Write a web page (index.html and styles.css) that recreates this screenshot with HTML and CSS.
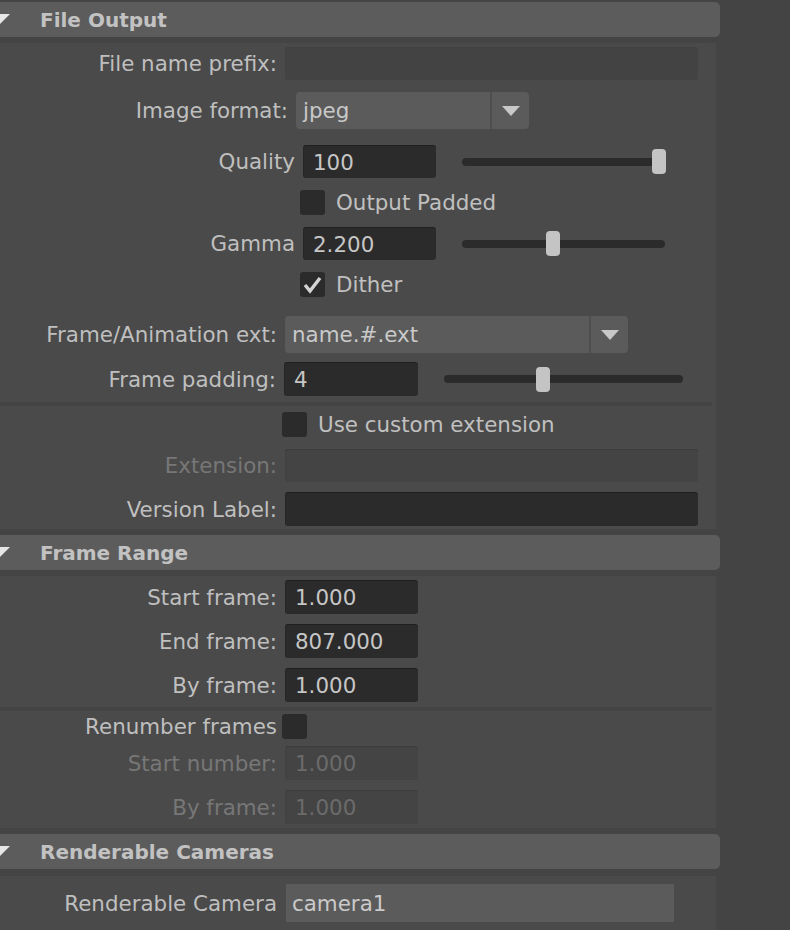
FILE: index.html
```html
<!DOCTYPE html>
<html>
<head>
<meta charset="utf-8">
<link rel="stylesheet" href="styles.css">
</head>
<body>
<div class="panel">
  <div class="header"><svg class="tri" width="12" height="12" viewBox="0 0 12 12"><polygon points="0,0 10,0 0,10" fill="#e6e6e6"/></svg><span>File Output</span></div>
  <div class="body b1">
    <div class="row h33">
      <div class="lbl w277">File name prefix:</div>
      <div class="field soft wide"></div>
    </div>
    <div class="row h37 g12">
      <div class="lbl w288">Image format:</div>
      <div class="dropdown dd1"><span class="ddtext">jpeg</span><span class="ddbtn"><svg width="18" height="10" viewBox="0 0 18 10"><polygon points="0,0 18,0 9,10" fill="#c8c8c8"/></svg></span></div>
    </div>
    <div class="row h33 g16">
      <div class="lbl w295">Quality</div>
      <div class="field dark num133"><span class="val">100</span></div>
      <div class="slider s203"><div class="track"></div><div class="thumb" style="left:190px"></div></div>
    </div>
    <div class="row h25 g12">
      <div class="spacer" style="width:300px"></div>
      <div class="check"></div><span class="ctext">Output Padded</span>
    </div>
    <div class="row h33 g12">
      <div class="lbl w295">Gamma</div>
      <div class="field dark num133"><span class="val">2.200</span></div>
      <div class="slider s203"><div class="track"></div><div class="thumb" style="left:84px"></div></div>
    </div>
    <div class="row h25 g12">
      <div class="spacer" style="width:300px"></div>
      <div class="check"><svg width="25" height="25" viewBox="0 0 25 25"><polyline points="5,13 10,19 20,6" fill="none" stroke="#d4d4d4" stroke-width="3.4" stroke-linejoin="miter"/></svg></div><span class="ctext">Dither</span>
    </div>
    <div class="row h37 g19">
      <div class="lbl w277">Frame/Animation ext:</div>
      <div class="dropdown dd2"><span class="ddtext">name.#.ext</span><span class="ddbtn"><svg width="18" height="10" viewBox="0 0 18 10"><polygon points="0,0 18,0 9,10" fill="#c8c8c8"/></svg></span></div>
    </div>
    <div class="row h34 g9">
      <div class="lbl w276">Frame padding:</div>
      <div class="field dark num134"><span class="val">4</span></div>
      <div class="slider s239"><div class="track"></div><div class="thumb" style="left:92px"></div></div>
    </div>
    <div class="sep"></div>
    <div class="row h25 g6">
      <div class="spacer" style="width:282px"></div>
      <div class="check"></div><span class="ctext">Use custom extension</span>
    </div>
    <div class="row h33 g12">
      <div class="lbl w277 dis">Extension:</div>
      <div class="field disabled wide"></div>
    </div>
    <div class="row h34 g10">
      <div class="lbl w277">Version Label:</div>
      <div class="field dark wide"></div>
    </div>
  </div>

  <div class="header"><svg class="tri" width="12" height="12" viewBox="0 0 12 12"><polygon points="0,0 10,0 0,10" fill="#e6e6e6"/></svg><span>Frame Range</span></div>
  <div class="body b2">
    <div class="row h34">
      <div class="lbl w277">Start frame:</div>
      <div class="field dark num133"><span class="val">1.000</span></div>
    </div>
    <div class="row h34 g10">
      <div class="lbl w277">End frame:</div>
      <div class="field dark num133"><span class="val">807.000</span></div>
    </div>
    <div class="row h34 g10">
      <div class="lbl w277">By frame:</div>
      <div class="field dark num133"><span class="val">1.000</span></div>
    </div>
    <div class="sep s2"></div>
    <div class="row h25 g3">
      <div class="lbl w277 tight">Renumber frames</div>
      <div class="check"></div>
    </div>
    <div class="row h34 g7">
      <div class="lbl w277 dis">Start number:</div>
      <div class="field disabled num133"><span class="val dval">1.000</span></div>
    </div>
    <div class="row h34 g10">
      <div class="lbl w277 dis">By frame:</div>
      <div class="field disabled num133"><span class="val dval">1.000</span></div>
    </div>
  </div>

  <div class="header"><svg class="tri" width="12" height="12" viewBox="0 0 12 12"><polygon points="0,0 10,0 0,10" fill="#e6e6e6"/></svg><span>Renderable Cameras</span></div>
  <div class="body b3">
    <div class="row h38">
      <div class="lbl w277">Renderable Camera</div>
      <div class="camfield"><span>camera1</span></div>
    </div>
  </div>
</div>
</body>
</html>
```

FILE: styles.css
```css
html, body {
  margin: 0;
  padding: 0;
  background: #444444;
  width: 790px;
  height: 930px;
  overflow: hidden;
  font-family: "DejaVu Sans", "Liberation Sans", sans-serif;
  color: #bdbdbd;
}

.panel {
  width: 720px;
  padding-top: 2px;
}

.header {
  height: 35px;
  background: #5c5c5c;
  border-radius: 0 5px 5px 0;
  display: flex;
  align-items: center;
  font-weight: bold;
  font-size: 20px;
  color: #c2c2c2;
  position: relative;
}

.header .tri {
  position: absolute;
  left: 0;
  top: 12px;
}

.header span {
  margin-left: 40px;
}

.body {
  width: 716px;
  background: #4a4a4a;
  margin-top: 6px;
  padding-top: 4px;
  font-size: 21.4px;
}

.b1 { padding-bottom: 3px; margin-bottom: 6px; }
.b2 { padding-bottom: 4px; margin-bottom: 6px; }
.b3 { padding-top: 8px; padding-bottom: 10px; margin-top: 7px; }

.row {
  display: flex;
  align-items: center;
}

.h25 { height: 25px; }
.h33 { height: 33px; }
.h34 { height: 34px; }
.h37 { height: 37px; }
.h38 { height: 38px; }

.g3 { margin-top: 3px; }
.g6 { margin-top: 6px; }
.g7 { margin-top: 7px; }
.g9 { margin-top: 9px; }
.g10 { margin-top: 10px; }
.g12 { margin-top: 12px; }
.g16 { margin-top: 16px; }
.g19 { margin-top: 19px; }

.lbl {
  text-align: right;
  white-space: nowrap;
  flex: none;
  box-sizing: border-box;
  padding-right: 8px;
  color: #bfbfbf;
}

.lbl.tight { padding-right: 5px; width: 282px; }
.lbl.dis { color: #777777; }

.w276 { width: 284px; }
.w277 { width: 285px; }
.w288 { width: 296px; }
.w295 { width: 303px; }

.spacer { flex: none; }

.field {
  box-sizing: border-box;
  height: 100%;
  border-radius: 3px;
  display: flex;
  align-items: center;
  flex: none;
}

.field.dark {
  background: #2b2b2b;
  border-top: 1px solid #1f1f1f;
  border-left: 1px solid #262626;
}

.field.soft {
  background: #434343;
  border-top: 1px solid #404040;
}

.field.disabled {
  background: #444444;
  border-top: 1px solid #3c3c3c;
  border-left: 1px solid #414141;
}

.wide { width: 413px; }
.num133 { width: 133px; }
.num134 { width: 134px; }

.val {
  padding-left: 9px;
  color: #c6c6c6;
}

.dval { color: #6b6b6b; }

.dropdown {
  height: 100%;
  background: #5b5b5b;
  border-radius: 4px;
  display: flex;
  align-items: center;
  flex: none;
}

.dd1 { width: 233px; }
.dd2 { width: 343px; }

.ddtext {
  flex: 1;
  padding-left: 7px;
  color: #c9c9c9;
}

.ddbtn {
  width: 37px;
  height: 100%;
  border-left: 2px solid #4e4e4e;
  display: flex;
  align-items: center;
  justify-content: center;
}

.slider {
  position: relative;
  height: 25px;
  margin-left: 26px;
  flex: none;
  display: flex;
  align-items: center;
}

.s203 { width: 203px; }
.s239 { width: 239px; }

.track {
  width: 100%;
  height: 8px;
  border-radius: 4px;
  background: #2b2b2b;
}

.thumb {
  position: absolute;
  top: 0;
  width: 14px;
  height: 25px;
  border-radius: 4px;
  background: #c4c4c4;
}

.check {
  width: 25px;
  height: 25px;
  background: #2b2b2b;
  border-radius: 3px;
  flex: none;
}

.check svg { display: block; }

.ctext {
  margin-left: 11px;
  color: #c0c0c0;
}

.sep {
  height: 4px;
  width: 712px;
  background: #444444;
  margin-top: 6px;
}

.sep.s2 { margin-top: 5px; }

.camfield {
  width: 388px;
  height: 100%;
  background: #5b5b5b;
  display: flex;
  align-items: center;
  flex: none;
  margin-left: 1px;
}

.camfield span {
  padding-left: 6px;
  color: #cacaca;
}
```
